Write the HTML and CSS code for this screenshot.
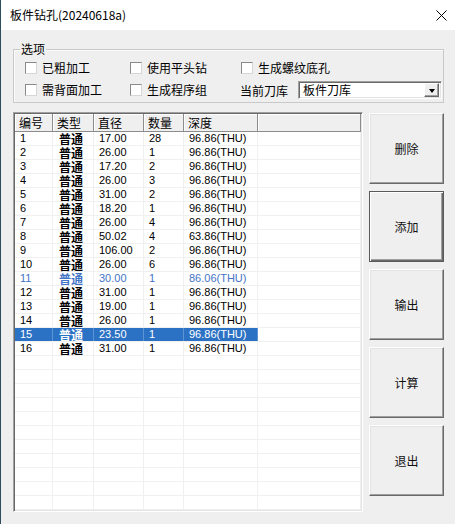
FILE: index.html
```html
<!DOCTYPE html>
<html lang="zh-CN">
<head>
<meta charset="utf-8">
<title>板件钻孔</title>
<link rel="stylesheet" href="styles.css">
</head>
<body>
<div class="window">
  <div class="titlebar">
    <span class="title">板件钻孔(20240618a)</span>
    <span class="close"><svg width="11" height="11" viewBox="0 0 11 11"><path d="M0.5 0.5 L10.5 10.5 M10.5 0.5 L0.5 10.5" stroke="#000" stroke-width="1" fill="none"/></svg></span>
  </div>
  <div class="content">
    <fieldset class="group">
      <legend>选项</legend>
      <div class="opt-row">
        <label class="chk"><span class="box"></span>已粗加工</label>
        <label class="chk"><span class="box"></span>使用平头钻</label>
        <label class="chk"><span class="box"></span>生成螺纹底孔</label>
      </div>
      <div class="opt-row row2">
        <label class="chk"><span class="box"></span>需背面加工</label>
        <label class="chk"><span class="box"></span>生成程序组</label>
        <div class="lib">
          <span class="lib-label">当前刀库</span>
          <div class="combo">
            <span class="combo-text">板件刀库</span>
            <span class="combo-btn"><span class="tri"></span></span>
          </div>
        </div>
      </div>
    </fieldset>
    <div class="main">
      <div class="list">
        <div class="row head">
          <div class="c">编号</div><div class="c">类型</div><div class="c">直径</div><div class="c">数量</div><div class="c">深度</div><div class="c"></div>
        </div>
        <div class="row"><div class="c">1</div><div class="c t">普通</div><div class="c">17.00</div><div class="c">28</div><div class="c">96.86(THU)</div><div class="c"></div></div>
        <div class="row"><div class="c">2</div><div class="c t">普通</div><div class="c">26.00</div><div class="c">1</div><div class="c">96.86(THU)</div><div class="c"></div></div>
        <div class="row"><div class="c">3</div><div class="c t">普通</div><div class="c">17.20</div><div class="c">2</div><div class="c">96.86(THU)</div><div class="c"></div></div>
        <div class="row"><div class="c">4</div><div class="c t">普通</div><div class="c">26.00</div><div class="c">3</div><div class="c">96.86(THU)</div><div class="c"></div></div>
        <div class="row"><div class="c">5</div><div class="c t">普通</div><div class="c">31.00</div><div class="c">2</div><div class="c">96.86(THU)</div><div class="c"></div></div>
        <div class="row"><div class="c">6</div><div class="c t">普通</div><div class="c">18.20</div><div class="c">1</div><div class="c">96.86(THU)</div><div class="c"></div></div>
        <div class="row"><div class="c">7</div><div class="c t">普通</div><div class="c">26.00</div><div class="c">4</div><div class="c">96.86(THU)</div><div class="c"></div></div>
        <div class="row"><div class="c">8</div><div class="c t">普通</div><div class="c">50.02</div><div class="c">4</div><div class="c">63.86(THU)</div><div class="c"></div></div>
        <div class="row"><div class="c">9</div><div class="c t">普通</div><div class="c">106.00</div><div class="c">2</div><div class="c">96.86(THU)</div><div class="c"></div></div>
        <div class="row"><div class="c">10</div><div class="c t">普通</div><div class="c">26.00</div><div class="c">6</div><div class="c">96.86(THU)</div><div class="c"></div></div>
        <div class="row blue"><div class="c">11</div><div class="c t">普通</div><div class="c">30.00</div><div class="c">1</div><div class="c">86.06(THU)</div><div class="c"></div></div>
        <div class="row"><div class="c">12</div><div class="c t">普通</div><div class="c">31.00</div><div class="c">1</div><div class="c">96.86(THU)</div><div class="c"></div></div>
        <div class="row"><div class="c">13</div><div class="c t">普通</div><div class="c">19.00</div><div class="c">1</div><div class="c">96.86(THU)</div><div class="c"></div></div>
        <div class="row"><div class="c">14</div><div class="c t">普通</div><div class="c">26.00</div><div class="c">1</div><div class="c">96.86(THU)</div><div class="c"></div></div>
        <div class="row sel"><div class="c">15</div><div class="c t">普通</div><div class="c">23.50</div><div class="c">1</div><div class="c">96.86(THU)</div><div class="c"></div></div>
        <div class="row"><div class="c">16</div><div class="c t">普通</div><div class="c">31.00</div><div class="c">1</div><div class="c">96.86(THU)</div><div class="c"></div></div>
        <div class="row"><div class="c"></div><div class="c"></div><div class="c"></div><div class="c"></div><div class="c"></div><div class="c"></div></div>
        <div class="row"><div class="c"></div><div class="c"></div><div class="c"></div><div class="c"></div><div class="c"></div><div class="c"></div></div>
        <div class="row"><div class="c"></div><div class="c"></div><div class="c"></div><div class="c"></div><div class="c"></div><div class="c"></div></div>
        <div class="row"><div class="c"></div><div class="c"></div><div class="c"></div><div class="c"></div><div class="c"></div><div class="c"></div></div>
        <div class="row"><div class="c"></div><div class="c"></div><div class="c"></div><div class="c"></div><div class="c"></div><div class="c"></div></div>
        <div class="row"><div class="c"></div><div class="c"></div><div class="c"></div><div class="c"></div><div class="c"></div><div class="c"></div></div>
        <div class="row"><div class="c"></div><div class="c"></div><div class="c"></div><div class="c"></div><div class="c"></div><div class="c"></div></div>
        <div class="row"><div class="c"></div><div class="c"></div><div class="c"></div><div class="c"></div><div class="c"></div><div class="c"></div></div>
        <div class="row"><div class="c"></div><div class="c"></div><div class="c"></div><div class="c"></div><div class="c"></div><div class="c"></div></div>
        <div class="row"><div class="c"></div><div class="c"></div><div class="c"></div><div class="c"></div><div class="c"></div><div class="c"></div></div>
        <div class="row"><div class="c"></div><div class="c"></div><div class="c"></div><div class="c"></div><div class="c"></div><div class="c"></div></div>
      </div>
      <div class="buttons">
        <div class="btn">删除</div>
        <div class="btn default">添加</div>
        <div class="btn">输出</div>
        <div class="btn">计算</div>
        <div class="btn">退出</div>
      </div>
    </div>
  </div>
</div>
</body>
</html>
```
FILE: styles.css
```css
* { box-sizing: border-box; }
html, body { margin: 0; padding: 0; }
body {
  width: 455px;
  height: 524px;
  overflow: hidden;
  font-family: "Noto Sans CJK SC", "Liberation Sans", sans-serif;
  font-size: 12px;
  color: #000;
  background: #f0efef;
}
.window {
  width: 455px;
  height: 524px;
  border-left: 1px solid #2f4d5c;
  display: flex;
  flex-direction: column;
  background: #f0efef;
}
.titlebar {
  height: 30px;
  flex: none;
  background: #fff;
  display: flex;
  align-items: center;
  justify-content: space-between;
  padding: 0 8px 0 9px;
}
.title { font-size: 12px; line-height: 16px; }
.close { display: flex; width: 11px; height: 11px; }
.content {
  flex: 1;
  padding: 11px 11px 12px 12px;
  display: flex;
  flex-direction: column;
}
.group {
  margin: 0;
  min-inline-size: 0;
  height: 62px;
  border: 1px solid #c9c9c9;
  box-shadow: inset 1px 1px 0 #fbfbfb;
  padding: 0 0 3px 11px;
}
.group legend {
  font-size: 12px;
  line-height: 16px;
  padding: 0 1px;
  margin-left: -5px;
}
.opt-row {
  display: grid;
  grid-template-columns: 105px 111px 1fr;
  align-items: center;
  height: 16px;
  margin-top: 3px;
}
.opt-row.row2 { height: 18px; margin-top: 5px; }
.chk {
  display: flex;
  align-items: center;
  gap: 5px;
  line-height: 16px;
  white-space: nowrap;
}
.box {
  width: 12px;
  height: 12px;
  flex: none;
  background: #fff;
  border: 1px solid;
  border-color: #8a8a8a #d6d6d6 #d6d6d6 #8a8a8a;
}
.lib { display: flex; align-items: center; margin-left: -1px; }
.lib-label { width: 58px; flex: none; }
.combo {
  width: 144px;
  height: 18px;
  background: #fff;
  border: 1px solid;
  border-color: #a0a0a0 #fff #fff #a0a0a0;
  box-shadow: inset 1px 1px 0 #696969, inset -1px -1px 0 #e3e3e3;
  display: flex;
  align-items: center;
  justify-content: space-between;
  padding: 1px 2px 1px 4px;
}
.combo-text { line-height: 14px; }
.combo-btn {
  width: 15px;
  height: 14px;
  background: #f0efef;
  border: 1px solid;
  border-color: #fff #696969 #696969 #fff;
  box-shadow: inset -1px -1px 0 #a0a0a0;
  display: flex;
  align-items: center;
  justify-content: center;
}
.tri {
  width: 0; height: 0;
  border-left: 3.5px solid transparent;
  border-right: 3.5px solid transparent;
  border-top: 4px solid #000;
  margin-top: 1px;
}
.main {
  margin-top: 9px;
  height: 400px;
  display: flex;
  gap: 6px;
}
.list {
  width: 350px;
  height: 400px;
  background: #fff;
  border: 1px solid;
  border-color: #a0a0a0 #fff #fff #a0a0a0;
  box-shadow: inset 1px 1px 0 #696969, inset -1px -1px 0 #e3e3e3;
  padding: 1px;
  overflow: hidden;
  font-family: "Liberation Sans", "Noto Sans CJK SC", sans-serif;
  font-size: 11px;
}
.row {
  display: grid;
  grid-template-columns: 38px 41px 50px 40px 74px 1fr;
  height: 14px;
  border-bottom: 1px solid #f0f0f0;
}
.row .c {
  padding-left: 5px;
  line-height: 13px;
  white-space: nowrap;
  border-right: 1px solid #f0f0f0;
}
.row .c.t {
  font-family: "Noto Sans CJK SC", sans-serif;
  font-size: 12px;
  line-height: 13px;
  font-weight: bold;
  padding-left: 6px;
}
.row.head {
  height: 18px;
  background: #f0efef;
  border-bottom: 1px solid #8c8c8c;
}
.row.head .c {
  font-family: "Noto Sans CJK SC", sans-serif;
  font-size: 12px;
  line-height: 17px;
  border-right: 1px solid #8c8c8c;
  box-shadow: inset 1px 1px 0 #fff;
  padding-left: 4px;
}
.row.blue .c { color: #4474c6; }
.row.sel .c { background: #2c72c4; color: #fff; border-right-color: #5b93d4; }
.row.sel .c:last-child { background: #fff; border-right-color: #f0f0f0; }
.buttons {
  width: 75px;
  margin-top: 1px;
  display: flex;
  flex-direction: column;
  gap: 7px;
}
.btn {
  height: 71px;
  display: flex;
  align-items: center;
  justify-content: center;
  background: #f0efef;
  border: 1px solid;
  border-color: #fff #696969 #696969 #fff;
  box-shadow: inset -1px -1px 0 #a0a0a0, inset 1px 1px 0 #e3e3e3;
  font-size: 12px;
  color: #111;
}
.btn.default {
  border-color: #5a5a5a;
  box-shadow: inset 1px 1px 0 #fff, inset -1px -1px 0 #696969, inset -2px -2px 0 #a0a0a0;
}
```
